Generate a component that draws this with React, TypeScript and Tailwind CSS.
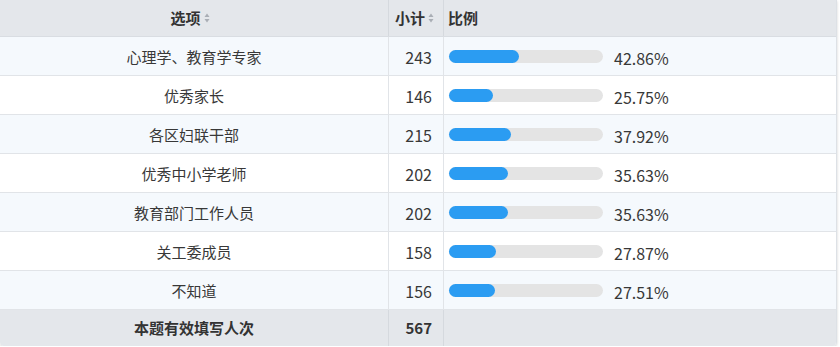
import * as React from "react"

const rows = [
  { label: "心理学、教育学专家", count: 243, pct: 42.86 },
  { label: "优秀家长", count: 146, pct: 25.75 },
  { label: "各区妇联干部", count: 215, pct: 37.92 },
  { label: "优秀中小学老师", count: 202, pct: 35.63 },
  { label: "教育部门工作人员", count: 202, pct: 35.63 },
  { label: "关工委成员", count: 158, pct: 27.87 },
  { label: "不知道", count: 156, pct: 27.51 },
]

function SortIcon() {
  return (
    <svg width="6" height="10" viewBox="0 0 6 10" className="ml-[3px] inline-block">
      <path d="M3 0.5 L5.5 4 L0.5 4 Z" fill="#a9aeb5" />
      <path d="M3 9.5 L5.5 6 L0.5 6 Z" fill="#a9aeb5" />
    </svg>
  )
}

export default function App() {
  return (
    <div
      className="w-[837px] bg-white text-[15px] text-[#383838]"
      style={{ fontFamily: '"Noto Sans CJK SC", "Noto Sans", sans-serif' }}
    >
      <div className="overflow-hidden rounded-b-[4px] border-r border-[#dde1e6] shadow-[0_1px_3px_rgba(0,0,0,0.18)]">
        {/* header */}
        <div className="grid h-[37px] grid-cols-[389px_55px_1fr] border-b border-[#d9dde2] bg-[#e4e7eb] font-bold text-[#333]">
          <div className="flex items-center justify-center border-r border-[#d5d9de] pr-[8px]">
            选项
            <SortIcon />
          </div>
          <div className="flex items-center border-r border-[#d5d9de] pl-[6px]">
            小计
            <SortIcon />
          </div>
          <div className="flex items-center pl-[4px]">比例</div>
        </div>

        {rows.map((r, i) => (
          <div
            key={r.label}
            className={
              "grid h-[39px] grid-cols-[389px_55px_1fr] border-b border-[#e1e4e8] " +
              (i % 2 === 0 ? "bg-[#f5f9fd]" : "bg-white")
            }
          >
            <div className="flex items-center justify-center border-r border-[#e1e4e8] pt-[2px]">
              {r.label}
            </div>
            <div className="flex items-center justify-end border-r border-[#e1e4e8] pr-[11px] pt-[2px] text-[16px]">
              {r.count}
            </div>
            <div className="flex items-center pl-[5px]">
              <div className="h-[13px] w-[154px] rounded-full bg-[#e4e4e4]">
                <div
                  className="h-full rounded-full bg-[#2b9cf2]"
                  style={{ width: `calc(${r.pct}% + 4px)` }}
                />
              </div>
              <span className="ml-[11px] pt-[4px] text-[16px]">{r.pct.toFixed(2)}%</span>
            </div>
          </div>
        ))}

        {/* footer */}
        <div className="grid h-[36px] grid-cols-[389px_55px_1fr] bg-[#e4e7eb] font-bold text-[#333]">
          <div className="flex items-center justify-center border-r border-[#d5d9de]">
            本题有效填写人次
          </div>
          <div className="flex items-center justify-end border-r border-[#d5d9de] pr-[11px]">
            567
          </div>
          <div />
        </div>
      </div>
    </div>
  )
}
